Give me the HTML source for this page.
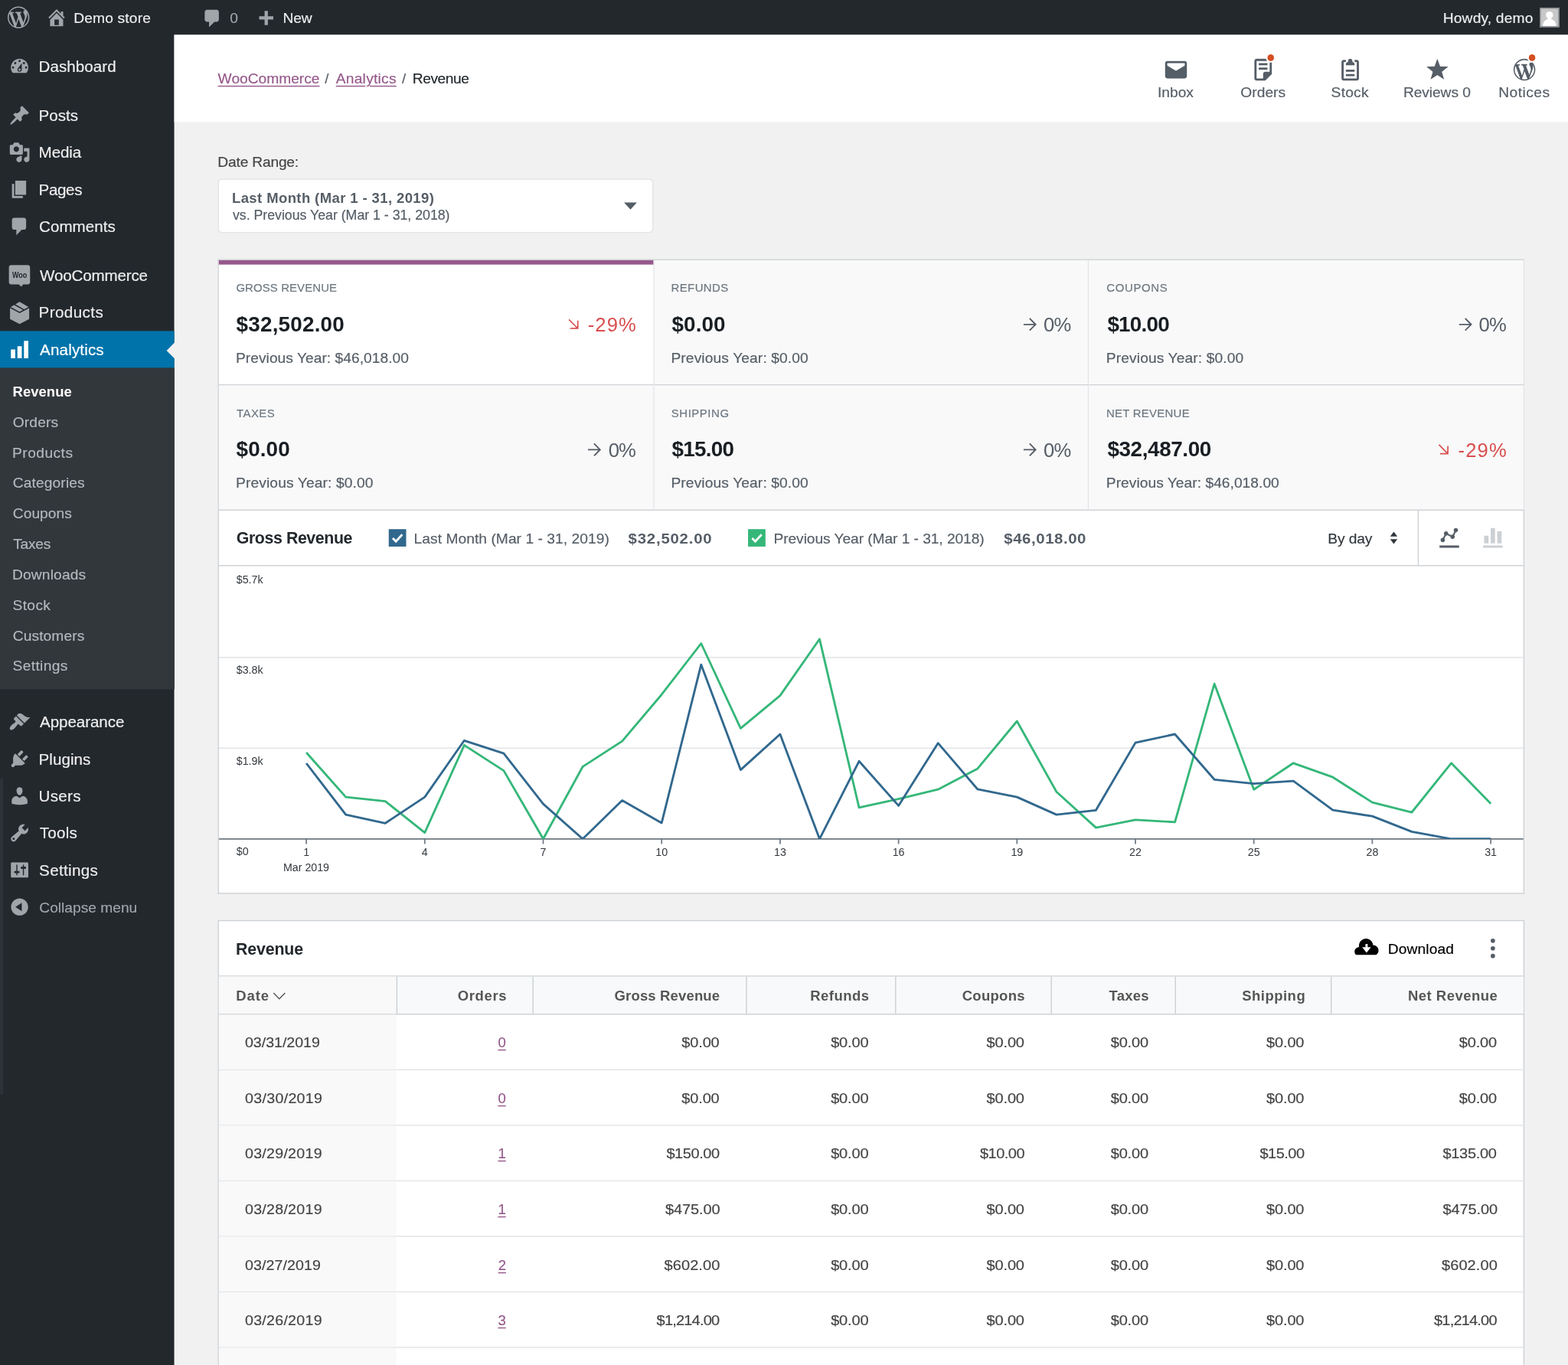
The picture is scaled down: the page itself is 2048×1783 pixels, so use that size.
<!DOCTYPE html>
<html lang="en">
<head>
<meta charset="utf-8">
<title>Revenue &lsaquo; Analytics &lsaquo; WooCommerce &lsaquo; Demo store &mdash; WordPress</title>
<style>
*{box-sizing:border-box;margin:0;padding:0}
html,body{width:2048px;height:1783px;overflow:hidden;background:#f1f1f1}
body{font-family:"Liberation Sans",sans-serif;color:#444}
#root{will-change:transform;position:absolute;left:0;top:0;width:1440px;height:1254px;transform:scale(1.4222222);transform-origin:0 0;overflow:hidden;background:#f1f1f1;font-size:13px}
#root div,#root ul,#root li,#root span,#root a,#root svg,#root b,#root i,#root h1,#root h2,#root label,#root p{position:absolute;display:block}
#root svg{fill:currentColor;overflow:visible}
ul{list-style:none}
.t{transform-origin:0 0;white-space:pre;font-weight:normal;font-style:normal;-webkit-text-stroke:0.12px currentColor}
.s10{font-size:10px;line-height:10px}
.s11{font-size:11px;line-height:11px}
.s12{font-size:12px;line-height:12px}
.s13{font-size:13px;line-height:13px}
.s14{font-size:14px;line-height:14px}
.s15{font-size:15px;line-height:15px}
.s18{font-size:18px;line-height:18px}
.s19{font-size:19px;line-height:19px}
.s105{font-size:10.5px;line-height:10.5px}
.s135{font-size:13.5px;line-height:13.5px}
.s125{font-size:12.5px;line-height:12.5px}
.s145{font-size:14.5px;line-height:14.5px}
.b{font-weight:bold;-webkit-text-stroke:0}
.lnk{color:#95588a;text-decoration:underline;text-decoration-thickness:1px;text-underline-offset:1.5px}
/* admin bar */
#adminbar{left:0;top:0;width:1440px;height:32px;background:#23282d;color:#eee}
#adminbar svg{color:#a0a5aa}
#adminbar .av{left:1414px;top:7px;width:18px;height:18px;background:#c8c8c8;border:1px solid #82878c;overflow:hidden}
/* sidebar */
#menuback{left:0;top:0;width:160px;height:1260px;background:#23282d}
#adminmenu{left:0;top:0;width:160px;height:1254px;color:#eee}
#adminmenu li{left:0;width:160px;height:34px}
#adminmenu li svg{color:#a0a5aa}
#adminmenu li.cur{background:#0073aa;color:#fff}
#adminmenu li.cur svg{color:#fff}
#adminmenu li.cur i{right:-0.6px;top:10px;width:0;height:0;border:8px solid transparent;border-right-color:#f1f1f1}
#adminmenu .sub{left:0;width:160px;background:#32373c}
#adminmenu .sub li{height:28px;color:#b4b9be}
#adminmenu .sub li.on{color:#fff}
#adminmenu li.col{color:#a0a5aa}
/* header */
#header{left:160px;top:32px;width:1280px;height:80px;background:#fff}
#header .tab{top:0;width:80px;height:80px;color:#555d66}
#header .dot{width:6.4px;height:6.4px;border-radius:50%;background:#d54e21;box-shadow:0 0 0 1.5px #fff}
/* filters */
#filters{left:200px;top:138px;width:1200px;height:80px}
#filters .dd{left:0;top:26px;width:400px;height:50px;background:#fff;border:1px solid #e2e4e7;border-radius:4px;color:#555d66}
/* summary */
#summary{left:200px;top:238px;width:1200px;height:231px;background:#f9f9f9;border:1px solid #ccd0d4;border-width:1px 0 0 1px}
#summary li{height:115px;border:1px solid #ccd0d4;border-width:0 1px 1px 0;border-right-color:#e2e4e7;background:#f9f9f9}
#summary li.sel{background:#fff}
#summary li.sel:before{content:"";position:absolute;left:0;right:0;top:0;height:4px;background:#95588a}
.lb{color:#6c7781;text-transform:uppercase}
.val{color:#191e23}
.dl{color:#555d66;-webkit-text-stroke:0}
.neg{color:#d94f4f;-webkit-text-stroke:0}
.pv{color:#555d66}
/* chart */
#chart{left:200px;top:469px;width:1200px;height:352px;background:#fff;border:1px solid #ccd0d4;border-top:0}
#chart .hd{left:0;top:0;width:1198px;height:51px;border-bottom:1px solid #ccd0d4}
#chart .cb{width:16px;height:16px}
#chart .vd{width:1px;height:50px;top:0;background:#ccd0d4}
#chartsvg text{font-family:"Liberation Sans",sans-serif;font-size:10px;fill:#32373c}
/* table */
#tcard{left:200px;top:845px;width:1200px;height:420px;background:#fff;border:1px solid #ccd0d4}
#tcard .hd{left:0;top:0;width:1198px;height:51px;border-bottom:1px solid #ccd0d4}
#tbl{left:0;top:51px;width:1198px;height:400px}
#tbl .tr{left:0;width:1198px;height:51px;border-bottom:1px solid #e2e4e7;color:#444}
#tbl .th{height:35px;background:#f8f9fa;color:#555;border-bottom:1px solid #ccd0d4}
#tbl .th i{top:0;width:1px;height:34px;background:#ccd0d4}
#tbl .dc{left:0;top:0;height:50px;background:#f9f9f9}
#tbl .th .dc{height:34px}
</style>
</head>
<body>
<div id="root">
<div id="menuback"></div>
<div style="left:0;top:715px;width:3px;height:290px;background:#2c3338"></div>
<ul id="adminmenu">
<li class="m" style="top:44px">
<svg width="20" height="20" viewBox="0 0 20 20" style="left:8px;top:7px"><path d="M3.76 16h12.48c1.1-1.37 1.76-3.11 1.76-5 0-4.42-3.58-8-8-8s-8 3.58-8 8c0 1.89.66 3.63 1.76 5zM10 4c.55 0 1 .45 1 1s-.45 1-1 1-1-.45-1-1 .45-1 1-1zM6 6c.55 0 1 .45 1 1s-.45 1-1 1-1-.45-1-1 .45-1 1-1zm8 0c.55 0 1 .45 1 1s-.45 1-1 1-1-.45-1-1 .45-1 1-1zm-5.37 5.55L12 7v6c0 1.1-.9 2-2 2s-2-.9-2-2c0-.57.24-1.08.63-1.45zM4 10c.55 0 1 .45 1 1s-.45 1-1 1-1-.45-1-1 .45-1 1-1zm12 0c.55 0 1 .45 1 1s-.45 1-1 1-1-.45-1-1 .45-1 1-1zm-5 3c0-.55-.45-1-1-1s-1 .45-1 1 .45 1 1 1 1-.45 1-1z"/></svg>
<span class="t s145" style="left:35.57px;top:10px;transform:translateY(0.094px);letter-spacing:0.02px">Dashboard</span>
</li>
<li class="m" style="top:89px">
<svg width="20" height="20" viewBox="0 0 20 20" style="left:8px;top:7px"><path d="M10.44 3.02l1.82-1.82 6.36 6.35-1.83 1.82c-1.05-.68-2.48-.57-3.41.36l-.75.75c-.92.93-1.04 2.35-.35 3.41l-1.83 1.82-2.41-2.41-2.8 2.79c-.42.42-3.38 2.71-3.8 2.29s1.86-3.39 2.28-3.81l2.79-2.79L4.1 9.36l1.83-1.82c1.05.69 2.48.57 3.4-.36l.75-.75c.93-.92 1.05-2.35.36-3.41z"/></svg>
<span class="t s145" style="left:35.57px;top:10px;transform:translateY(0.094px);letter-spacing:-0.01px">Posts</span>
</li>
<li class="m" style="top:123px">
<svg width="20" height="20" viewBox="0 0 20 20" style="left:8px;top:7px"><path d="M13 11V4c0-.55-.45-1-1-1h-1.67L9 1H5L3.67 3H2c-.55 0-1 .45-1 1v7c0 .55.45 1 1 1h10c.55 0 1-.45 1-1zM7 4.5c1.38 0 2.5 1.12 2.5 2.5S8.38 9.5 7 9.5 4.5 8.38 4.5 7 5.62 4.5 7 4.5zM14 6h5v10.5c0 1.38-1.12 2.5-2.5 2.5S14 17.88 14 16.5s1.12-2.5 2.5-2.5c.17 0 .34.02.5.05V9h-3V6zm-4 8.05V13h2v3.5c0 1.38-1.12 2.5-2.5 2.5S7 17.88 7 16.5 8.12 14 9.5 14c.17 0 .34.02.5.05z"/></svg>
<span class="t s145" style="left:35.57px;top:9px;transform:translateY(0.844px);letter-spacing:-0.08px">Media</span>
</li>
<li class="m" style="top:157px">
<svg width="20" height="20" viewBox="0 0 20 20" style="left:8px;top:7px"><path d="M6 15V2h10v13H6zm-1 1h8v2H3V5h2v11z"/></svg>
<span class="t s145" style="left:35.57px;top:10px;transform:translateY(0.297px);letter-spacing:-0.27px">Pages</span>
</li>
<li class="m" style="top:191px">
<svg width="20" height="20" viewBox="0 0 20 20" style="left:8px;top:7px"><path d="M5 2h9q.82 0 1.41.59T16 4v7q0 .82-.59 1.41T14 13h-2l-5 5v-5H5q-.82 0-1.41-.59T3 11V4q0-.82.59-1.41T5 2z"/></svg>
<span class="t s145" style="left:35.93px;top:10px;transform:translateY(0.047px);letter-spacing:-0.01px">Comments</span>
</li>
<li class="m" style="top:236px">
<svg width="20" height="21" viewBox="0 0 20 21" style="left:8px;top:7px"><path d="M2.2.5h15.4c1.1 0 2 .9 2 2v13.7c0 1.1-.9 2-2 2h-4.4l-1.5 2.2-2.6-2.2H2.2c-1.1 0-2-.9-2-2V2.500c0-1.1.9-2 2-2z"/><text x="3.200" y="12" textLength="13.600" lengthAdjust="spacingAndGlyphs" font-family="Liberation Sans,sans-serif" font-size="7.800" font-weight="bold" fill="#23282d">Woo</text></svg>
<span class="t s145" style="left:36.63px;top:10px;transform:translateY(0.047px);letter-spacing:-0.14px">WooCommerce</span>
</li>
<li class="m" style="top:270px">
<svg width="20" height="21" viewBox="0 0 20 21" style="left:8px;top:7px"><path d="M10 .2l8.8 5.1v10.8L10 20.6l-8.8-4.500V5.300z"/><g fill="none" stroke="#23282d" stroke-width="1.1"><path d="M1.2 5.300L10 10l8.800-4.700"/><path d="M5.300 2.700l8.900 5"/></g></svg>
<span class="t s145" style="left:35.57px;top:9px;transform:translateY(0.797px);letter-spacing:0.28px">Products</span>
</li>
<li class="m cur" style="top:304px">
<svg width="20" height="20" viewBox="0 0 20 20" style="left:8px;top:7px"><path d="M18 18V2h-4v16h4zm-6 0V7H8v11h4zm-6 0v-8H2v8h4z"/></svg>
<span class="t s145" style="left:36.63px;top:10px;transform:translateY(0.250px);letter-spacing:0.09px">Analytics</span>
<i></i>
</li>
<li class="sub" style="top:338px;height:295px"><ul class="sub" style="top:0;height:295px">
<li class=on style="top:7px">
<span class="t s13 b" style="left:11.63px;top:8px;transform:translateY(0.219px);letter-spacing:0.02px">Revenue</span>
</li>
<li style="top:35px">
<span class="t s135" style="left:11.81px;top:8px;transform:translateY(0.344px);letter-spacing:0.09px">Orders</span>
</li>
<li style="top:63px">
<span class="t s135" style="left:11.28px;top:8px;transform:translateY(0.469px);letter-spacing:0.32px">Products</span>
</li>
<li style="top:91px">
<span class="t s135" style="left:11.81px;top:7px;transform:translateY(0.891px);letter-spacing:0.08px">Categories</span>
</li>
<li style="top:119px">
<span class="t s135" style="left:11.81px;top:8px;transform:translateY(0.016px);letter-spacing:0.02px">Coupons</span>
</li>
<li style="top:147px">
<span class="t s135" style="left:12.16px;top:8px;transform:translateY(0.141px);letter-spacing:-0.2px">Taxes</span>
</li>
<li style="top:175px">
<span class="t s135" style="left:11.28px;top:8px;transform:translateY(0.266px);letter-spacing:0.1px">Downloads</span>
</li>
<li style="top:203px">
<span class="t s135" style="left:11.63px;top:8px;transform:translateY(0.391px);letter-spacing:0.24px">Stock</span>
</li>
<li style="top:231px">
<span class="t s135" style="left:11.81px;top:8px;transform:translateY(0.516px);letter-spacing:0.06px">Customers</span>
</li>
<li style="top:259px">
<span class="t s135" style="left:11.63px;top:7px;transform:translateY(0.938px);letter-spacing:0.24px">Settings</span>
</li>
</ul></li>
<li class="m" style="top:646px">
<svg width="20" height="20" viewBox="0 0 20 20" style="left:8px;top:7px"><path d="M14.48 11.06L7.41 3.99l1.5-1.5c.5-.56 2.3-.47 3.51.32 1.21.8 1.43 1.28 2.91 2.1 1.18.64 2.45 1.26 4.45.85zm-.71.71L6.7 4.7 4.93 6.47c-.39.39-.39 1.02 0 1.41l1.06 1.06c.39.39.39 1.03 0 1.42-.6.6-1.43 1.11-2.21 1.69-.35.26-.7.53-1.01.84C1.43 14.23.4 16.08 1.4 17.07c.99 1 2.84-.03 4.18-1.36.31-.31.58-.66.85-1.02.57-.78 1.08-1.61 1.69-2.21.39-.39 1.02-.39 1.41 0l1.06 1.06c.39.39 1.02.39 1.41 0z"/></svg>
<span class="t s145" style="left:36.63px;top:9px;transform:translateY(0.969px);letter-spacing:-0.07px">Appearance</span>
</li>
<li class="m" style="top:680px">
<svg width="20" height="20" viewBox="0 0 20 20" style="left:8px;top:7px"><path d="M13.11 4.36L9.87 7.6 8 5.73l3.24-3.24c.35-.34 1.05-.2 1.56.32.52.51.66 1.21.31 1.55zm-8 1.77l.91-1.12 9.01 9.01-1.19.84c-.71.71-2.63 1.16-3.82 1.16H6.14L4.9 17.26c-.59.59-1.54.59-2.12 0-.59-.58-.59-1.53 0-2.12l1.24-1.24v-3.88c0-1.13.4-3.19 1.09-3.89zm7.26 3.97l3.24-3.24c.34-.35 1.04-.21 1.55.31.52.51.66 1.21.31 1.55l-3.24 3.25z"/></svg>
<span class="t s145" style="left:35.57px;top:10px;transform:translateY(0.422px);letter-spacing:0.02px">Plugins</span>
</li>
<li class="m" style="top:714px">
<svg width="20" height="20" viewBox="0 0 20 20" style="left:8px;top:7px"><path d="M10 9.25c-2.27 0-2.73-3.44-2.73-3.44C7 4.02 7.82 2 9.97 2c2.16 0 2.98 2.02 2.71 3.81 0 0-.41 3.44-2.68 3.44zm0 2.57L12.72 10c2.39 0 4.52 2.33 4.52 4.53v2.49s-3.65 1.13-7.24 1.13c-3.65 0-7.24-1.13-7.24-1.13v-2.49c0-2.25 1.94-4.48 4.47-4.48z"/></svg>
<span class="t s145" style="left:35.57px;top:10px;transform:translateY(0.172px);letter-spacing:0.18px">Users</span>
</li>
<li class="m" style="top:748px">
<svg width="20" height="20" viewBox="0 0 20 20" style="left:8px;top:7px"><path d="M16.68 9.77c-1.34 1.34-3.3 1.67-4.95.99l-5.41 6.52c-.99.99-2.59.99-3.58 0s-.99-2.59 0-3.57l6.52-5.42c-.68-1.65-.35-3.61.99-4.95 1.28-1.28 3.12-1.62 4.72-1.06l-2.89 2.89 2.82 2.82 2.86-2.87c.53 1.58.18 3.39-1.08 4.65zM3.81 16.21c.4.39 1.04.39 1.43 0 .4-.4.4-1.04 0-1.43-.39-.4-1.03-.4-1.43 0-.39.39-.39 1.03 0 1.43z"/></svg>
<span class="t s145" style="left:36.45px;top:9px;transform:translateY(0.922px);letter-spacing:0.14px">Tools</span>
</li>
<li class="m" style="top:782px">
<svg width="20" height="20" viewBox="0 0 20 20" style="left:8px;top:7px"><path d="M18 16V4c0-.55-.45-1-1-1H3c-.55 0-1 .45-1 1v12c0 .55.45 1 1 1h14c.55 0 1-.45 1-1zM8 11h1c.55 0 1 .45 1 1s-.45 1-1 1H8v1.5c0 .28-.22.5-.5.5s-.5-.22-.5-.5V13H6c-.55 0-1-.45-1-1s.45-1 1-1h1V5.5c0-.28.22-.5.5-.5s.5.22.5.5V11zm5-2h-1c-.55 0-1-.45-1-1s.45-1 1-1h1V5.5c0-.28.22-.5.5-.5s.5.22.5.5V7h1c.55 0 1 .45 1 1s-.45 1-1 1h-1v5.5c0 .28-.22.5-.5.5s-.5-.22-.5-.5V9z"/></svg>
<span class="t s145" style="left:35.93px;top:10px;transform:translateY(0.375px);letter-spacing:0.23px">Settings</span>
</li>
<li class="m col" style="top:816px">
<svg width="20" height="20" viewBox="0 0 20 20" style="left:8px;top:7px"><path d="M10 2.16c4.33 0 7.84 3.51 7.84 7.84s-3.51 7.84-7.84 7.84S2.16 14.33 2.16 10 5.67 2.16 10 2.16zm2 11.72V6.12L6.18 9.97z"/></svg>
<span class="t s135" style="left:36.1px;top:11px;transform:translateY(0.125px);letter-spacing:-0.01px">Collapse menu</span>
</li>
</ul>
<div id="adminbar">
<svg width="20" height="20" viewBox="0 0 20 20" style="left:7px;top:6px"><path d="M20 10c0-5.51-4.49-10-10-10C4.48 0 0 4.49 0 10c0 5.52 4.48 10 10 10 5.51 0 10-4.48 10-10zM7.78 15.37L4.37 6.22c.55-.02 1.17-.08 1.17-.08.5-.06.44-1.13-.06-1.11 0 0-1.45.11-2.37.11-.18 0-.37 0-.58-.01C4.12 2.69 6.87 1.11 10 1.11c2.33 0 4.45.87 6.05 2.34-.68-.11-1.65.39-1.65 1.58 0 .74.45 1.36.9 2.1.35.61.55 1.36.55 2.46 0 1.49-1.4 5-1.4 5l-3.03-8.37c.54-.02.82-.17.82-.17.5-.05.44-1.25-.06-1.22 0 0-1.44.12-2.38.12-.87 0-2.33-.12-2.33-.12-.5-.03-.56 1.2-.06 1.22l.92.08 1.26 3.41zM17.41 10c.24-.64.74-1.87.43-4.25.7 1.29 1.05 2.71 1.05 4.25 0 3.29-1.73 6.24-4.4 7.78.97-2.59 1.94-5.2 2.92-7.78zM6.1 18.09C3.12 16.65 1.11 13.53 1.11 10c0-1.3.23-2.48.72-3.59C3.25 10.3 4.67 14.2 6.1 18.09zm4.03-6.63l2.58 6.98c-.86.29-1.76.45-2.71.45-.79 0-1.57-.11-2.29-.33.81-2.38 1.62-4.74 2.42-7.1z"/></svg>
<svg width="20" height="20" viewBox="0 0 20 20" style="left:42px;top:6px"><path d="M16 8.5l1.53 1.53-1.06 1.06L10 4.62l-6.47 6.47-1.06-1.06L10 2.5l4 4v-2h2v4zm-6-2.46l6 5.99V18H4v-5.97zM12 17v-5H8v5h4z"/></svg>
<span class="t s135" style="left:67.67px;top:10px;transform:translateY(0.094px);letter-spacing:0.11px">Demo store</span>
<svg width="20" height="20" viewBox="0 0 20 20" style="left:185px;top:7.4px"><path d="M5 2h9q.82 0 1.41.59T16 4v7q0 .82-.59 1.41T14 13h-2l-5 5v-5H5q-.82 0-1.41-.59T3 11V4q0-.82.59-1.41T5 2z"/></svg>
<span class="t s135" style="left:211.11px;top:10px;transform:translateY(0.094px);color:#a0a5aa">0</span>
<svg width="20" height="20" viewBox="0 0 20 20" style="left:234.4px;top:8.3px"><path d="M17 7v3h-5v5H9v-5H4V7h5V2h3v5h5z"/></svg>
<span class="t s135" style="left:259.77px;top:10px;transform:translateY(0.094px);letter-spacing:-0.09px">New</span>
<span class="t s135" style="left:1325.21px;top:10px;transform:translateY(0.094px);letter-spacing:0.12px">Howdy, demo</span>
<div class="av"><svg width="16" height="16" viewBox="0 0 16 16" style="left:0;top:0;color:#fff"><circle cx="8" cy="5.800" r="3.300"/><path d="M1.900 16c0-3.600 1.900-5.800 4.500-6.500V8h3.200v1.500c2.600.700 4.500 2.900 4.500 6.500z"/></svg></div>
</div>
<div id="header">
<a class="t s135 lnk" style="left:40.14px;top:33px;transform:translateY(0.641px);letter-spacing:-0.01px">WooCommerce</a>
<span class="t s13" style="left:138.37px;top:33px;transform:translateY(0.641px);color:#555d66">/</span>
<a class="t s135 lnk" style="left:148.49px;top:33px;transform:translateY(0.641px);letter-spacing:0.17px">Analytics</a>
<span class="t s13" style="left:209.1px;top:33px;transform:translateY(0.641px);color:#555d66">/</span>
<span class="t s135" style="left:218.88px;top:33px;transform:translateY(0.641px);letter-spacing:-0.33px;color:#23282d">Revenue</span>
<div class="tab" style="left:880px">
<svg width="24" height="24" viewBox="0 0 24 24" style="left:28px;top:20px"><path d="M20 4H4c-1.105 0-2 .895-2 2v12c0 1.105.895 2 2 2h16c1.105 0 2-.895 2-2V6c0-1.105-.895-2-2-2zm0 4.236l-8 4.882-8-4.882V6h16v2.236z"/></svg>
<span class="t s135" style="left:23.05px;top:46px;transform:translateY(0.297px);letter-spacing:0.02px">Inbox</span>
</div>
<div class="tab" style="left:960px">
<svg width="24" height="24" viewBox="0 0 24 24" style="left:28px;top:20px"><path d="M16 8H8V6h8v2zm0 2H8v2h8v-2zm4-6v12l-6 6H6c-1.105 0-2-.895-2-2V4c0-1.105.895-2 2-2h12c1.105 0 2 .895 2 2zm-2 10V4H6v16h6v-4c0-1.105.895-2 2-2h4z"/></svg>
<b class="dot" style="left:43.8px;top:17.700px"></b>
<span class="t s135" style="left:19.27px;top:46px;transform:translateY(0.297px);letter-spacing:0.02px">Orders</span>
</div>
<div class="tab" style="left:1040px">
<svg width="24" height="24" viewBox="0 0 24 24" style="left:28px;top:20px"><path d="M16 18H8v-2h8v2zm0-6H8v2h8v-2zm2-9h-2v2h2v15H6V5h2V3H6c-1.105 0-2 .895-2 2v15c0 1.105.895 2 2 2h12c1.105 0 2-.895 2-2V5c0-1.105-.895-2-2-2zm-4 2V4c0-1.105-.895-2-2-2s-2 .895-2 2v1c-1.105 0-2 .895-2 2v1h8V7c0-1.105-.895-2-2-2z"/></svg>
<span class="t s135" style="left:22.48px;top:46px;transform:translateY(0.297px);letter-spacing:0.15px">Stock</span>
</div>
<div class="tab" style="left:1120px">
<svg width="24" height="24" viewBox="0 0 24 24" style="left:28px;top:20px"><path d="M12 2l2.582 6.953L22 9.257l-5.822 4.602L18.18 21 12 16.89 5.82 21l2.002-7.14L2 9.256l7.418-.304z"/></svg>
<span class="t s135" style="left:8.75px;top:46px;transform:translateY(0.297px);letter-spacing:-0.05px">Reviews 0</span>
</div>
<div class="tab" style="left:1200px">
<svg width="20" height="20" viewBox="0 0 20 20" style="left:30px;top:21.9px"><path d="M20 10c0-5.51-4.49-10-10-10C4.48 0 0 4.49 0 10c0 5.52 4.48 10 10 10 5.51 0 10-4.48 10-10zM7.78 15.37L4.37 6.22c.55-.02 1.17-.08 1.17-.08.5-.06.44-1.13-.06-1.11 0 0-1.45.11-2.37.11-.18 0-.37 0-.58-.01C4.12 2.69 6.87 1.11 10 1.11c2.33 0 4.45.87 6.05 2.34-.68-.11-1.65.39-1.65 1.58 0 .74.45 1.36.9 2.1.35.61.55 1.36.55 2.46 0 1.49-1.4 5-1.4 5l-3.03-8.37c.54-.02.82-.17.82-.17.5-.05.44-1.25-.06-1.22 0 0-1.44.12-2.38.12-.87 0-2.33-.12-2.33-.12-.5-.03-.56 1.2-.06 1.22l.92.08 1.26 3.41zM17.41 10c.24-.64.74-1.87.43-4.25.7 1.29 1.05 2.71 1.05 4.25 0 3.29-1.73 6.24-4.4 7.78.97-2.59 1.94-5.2 2.92-7.78zM6.1 18.09C3.12 16.65 1.11 13.53 1.11 10c0-1.3.23-2.48.72-3.59C3.25 10.3 4.67 14.2 6.1 18.09zm4.03-6.63l2.58 6.98c-.86.29-1.76.45-2.71.45-.79 0-1.57-.11-2.29-.33.81-2.38 1.62-4.74 2.42-7.1z"/></svg>
<b class="dot" style="left:43.8px;top:17.700px"></b>
<span class="t s135" style="left:16.22px;top:46px;transform:translateY(0.297px);letter-spacing:0.32px">Notices</span>
</div>
</div>
<div id="filters">
<span class="t s135" style="left:-0.07px;top:4px;transform:translateY(0.281px);letter-spacing:-0.14px;color:#444">Date Range:</span>
<div class="dd">
<span class="t s13 b" style="left:12.05px;top:10px;transform:translateY(0.328px);letter-spacing:0.28px">Last Month (Mar 1 - 31, 2019)</span>
<span class="t s125" style="left:12.71px;top:26px;transform:translateY(0.797px);letter-spacing:-0.02px">vs. Previous Year (Mar 1 - 31, 2018)</span>
<svg width="12" height="7" viewBox="0 0 12 7" style="left:371.99px;top:20.55px"><path d="M.100 0h11.800L6 6.400z"/></svg>
</div>
</div>
<ul id="summary">
<li class=sel style="left:0px;top:0px;width:399.67px">
<span class="t s105 lb" style="left:15.84px;top:19px;transform:translateY(0.891px);letter-spacing:0.08px">Gross Revenue</span>
<span class="t s19 b val" style="left:16.47px;top:49px;transform:translateY(0.453px) scaleX(1.03);letter-spacing:0.14px">$32,502.00</span>
<svg class="neg" width="18" height="18" viewBox="0 0 24 24" style="left:316.92px;top:49.95px"><path transform="rotate(45 12 12)" d="M12.700 4.700l-1.100 1.100L16.900 11.200H3.500v1.600h13.400l-5.300 5.400 1.100 1.100 7.300-7.300z"/></svg>
<span class="t s18 neg" style="left:338.75px;top:50px;transform:translateY(0.453px);letter-spacing:0.81px">-29%</span>
<span class="t s135 pv" style="left:15.59px;top:83px;transform:translateY(0.281px);letter-spacing:0.02px">Previous Year: $46,018.00</span>
</li>
<li style="left:399.67px;top:0px;width:399.67px">
<span class="t s105 lb" style="left:15.66px;top:19px;transform:translateY(0.891px);letter-spacing:0.29px">Refunds</span>
<span class="t s19 b val" style="left:16.47px;top:49px;transform:translateY(0.453px) scaleX(1.03);letter-spacing:0.06px">$0.00</span>
<svg class="dl" width="18" height="18" viewBox="0 0 24 24" style="left:336.47px;top:50.05px"><path d="M12 4l-1.200 1.200L16.700 11.150H4v1.700h12.700l-5.900 5.950L12 20l8-8z"/></svg>
<span class="t s18 dl" style="left:357.77px;top:50px;transform:translateY(0.453px);letter-spacing:-0.6px">0%</span>
<span class="t s135 pv" style="left:15.59px;top:83px;transform:translateY(0.281px);letter-spacing:0.08px">Previous Year: $0.00</span>
</li>
<li style="left:799.33px;top:0px;width:399.67px">
<span class="t s105 lb" style="left:15.84px;top:19px;transform:translateY(0.891px);letter-spacing:0.47px">Coupons</span>
<span class="t s19 b val" style="left:16.47px;top:49px;transform:translateY(0.453px) scaleX(1.03);letter-spacing:-0.53px">$10.00</span>
<svg class="dl" width="18" height="18" viewBox="0 0 24 24" style="left:336.47px;top:50.05px"><path d="M12 4l-1.200 1.200L16.700 11.150H4v1.700h12.700l-5.900 5.950L12 20l8-8z"/></svg>
<span class="t s18 dl" style="left:357.77px;top:50px;transform:translateY(0.453px);letter-spacing:-0.6px">0%</span>
<span class="t s135 pv" style="left:15.59px;top:83px;transform:translateY(0.281px);letter-spacing:0.08px">Previous Year: $0.00</span>
</li>
<li style="left:0px;top:115px;width:399.67px">
<span class="t s105 lb" style="left:16.19px;top:20px;transform:translateY(0.203px);letter-spacing:0.36px">Taxes</span>
<span class="t s19 b val" style="left:16.47px;top:49px;transform:translateY(0.062px) scaleX(1.03);letter-spacing:0.06px">$0.00</span>
<svg class="dl" width="18" height="18" viewBox="0 0 24 24" style="left:336.47px;top:50.05px"><path d="M12 4l-1.200 1.200L16.700 11.150H4v1.700h12.700l-5.900 5.950L12 20l8-8z"/></svg>
<span class="t s18 dl" style="left:357.77px;top:50px;transform:translateY(0.766px);letter-spacing:-0.6px">0%</span>
<span class="t s135 pv" style="left:15.59px;top:82px;transform:translateY(0.891px);letter-spacing:0.08px">Previous Year: $0.00</span>
</li>
<li style="left:399.67px;top:115px;width:399.67px">
<span class="t s105 lb" style="left:15.84px;top:20px;transform:translateY(0.203px);letter-spacing:0.39px">Shipping</span>
<span class="t s19 b val" style="left:16.47px;top:49px;transform:translateY(0.062px) scaleX(1.03);letter-spacing:-0.5px">$15.00</span>
<svg class="dl" width="18" height="18" viewBox="0 0 24 24" style="left:336.47px;top:50.05px"><path d="M12 4l-1.200 1.200L16.700 11.150H4v1.700h12.700l-5.900 5.950L12 20l8-8z"/></svg>
<span class="t s18 dl" style="left:357.77px;top:50px;transform:translateY(0.766px);letter-spacing:-0.6px">0%</span>
<span class="t s135 pv" style="left:15.59px;top:82px;transform:translateY(0.891px);letter-spacing:0.08px">Previous Year: $0.00</span>
</li>
<li style="left:799.33px;top:115px;width:399.67px">
<span class="t s105 lb" style="left:15.66px;top:20px;transform:translateY(0.203px);letter-spacing:0.19px">Net Revenue</span>
<span class="t s19 b val" style="left:16.47px;top:49px;transform:translateY(0.062px) scaleX(1.03);letter-spacing:-0.26px">$32,487.00</span>
<svg class="neg" width="18" height="18" viewBox="0 0 24 24" style="left:316.92px;top:49.95px"><path transform="rotate(45 12 12)" d="M12.700 4.700l-1.100 1.100L16.900 11.200H3.500v1.600h13.400l-5.300 5.400 1.100 1.100 7.300-7.300z"/></svg>
<span class="t s18 neg" style="left:338.75px;top:50px;transform:translateY(0.766px);letter-spacing:0.81px">-29%</span>
<span class="t s135 pv" style="left:15.59px;top:82px;transform:translateY(0.891px);letter-spacing:0.02px">Previous Year: $46,018.00</span>
</li>
</ul>
<div id="chart">
<div class="hd">
<span class="t s15 b" style="left:16.05px;top:17px;transform:translateY(0.219px);letter-spacing:-0.28px;color:#23282d">Gross Revenue</span>
<div class="cb" style="left:156.19px;top:17.21px;background:#31688e"><svg width="16" height="16" viewBox="0 0 16 16" style="left:0;top:0"><path fill="none" stroke="#fff" stroke-width="2" d="M3.700 8.300l2.900 2.900 5.800-6.200"/></svg></div>
<span class="t s135 pv" style="left:179.14px;top:19px;transform:translateY(0.219px);letter-spacing:0.03px">Last Month (Mar 1 - 31, 2019)</span>
<span class="t s13 b pv" style="left:375.54px;top:19px;transform:translateY(0.219px) scaleX(1.1);letter-spacing:0.51px">$32,502.00</span>
<div class="cb" style="left:486.09px;top:17.21px;background:#35b779"><svg width="16" height="16" viewBox="0 0 16 16" style="left:0;top:0"><path fill="none" stroke="#fff" stroke-width="2" d="M3.700 8.300l2.900 2.900 5.800-6.200"/></svg></div>
<span class="t s135 pv" style="left:509.47px;top:19px;transform:translateY(0.219px);letter-spacing:-0.05px">Previous Year (Mar 1 - 31, 2018)</span>
<span class="t s13 b pv" style="left:720.63px;top:19px;transform:translateY(0.219px) scaleX(1.1);letter-spacing:0.38px">$46,018.00</span>
<span class="t s135" style="left:1018.46px;top:19px;transform:translateY(0.219px);letter-spacing:-0.08px;color:#32373c">By day</span>
<svg width="8" height="12" viewBox="0 0 8 12" style="left:1075.04px;top:19.09px;color:#32373c"><path d="M4 .400l3.300 4.400H.700zM4 11.600L.700 7.200h6.600z"/></svg>
<div class="vd" style="left:1101px"></div>
<svg width="24" height="24" viewBox="0 0 24 24" style="left:1118px;top:13.1px;color:#555d66"><path d="M3 19h18v2H3zm3-3c1.1 0 2-.9 2-2 0-.5-.2-1-.5-1.3L8.8 10H9c.5 0 1-.2 1.3-.5l2.7 1.4v.1c0 1.1.9 2 2 2s2-.9 2-2c0-.5-.2-.9-.5-1.3L17.8 7h.2c1.1 0 2-.9 2-2s-.9-2-2-2-2 .9-2 2c0 .5.2 1 .5 1.3L15.2 9H15c-.5 0-1 .2-1.3.5L11 8.2V8c0-1.1-.9-2-2-2s-2 .9-2 2c0 .5.2 1 .5 1.3L6.2 12H6c-1.1 0-2 .9-2 2s.9 2 2 2z"/></svg>
<svg width="24" height="24" viewBox="0 0 24 24" style="left:1158.1px;top:13.1px;color:#ccd0d4"><path d="M21 21H3v-2h18v2zM8 10H4v7h4v-7zm6-7h-4v14h4V3zm6 3h-4v11h4V6z"/></svg>
</div>
<svg id="chartsvg" width="1198" height="300" viewBox="0 0 1198 300" style="left:0;top:51px">
<g stroke="#e2e4e7" stroke-width="1">
<line x1="0" x2="1198" y1="83.84" y2="83.84"/>
<line x1="0" x2="1198" y1="167.16" y2="167.16"/>
</g>
<g fill="#32373c">
<text x="16.13" y="15.57">$5.7k</text>
<text x="16.13" y="98.89">$3.8k</text>
<text x="16.13" y="182.21">$1.9k</text>
<text x="16.13" y="265.53">$0</text>
<text x="80.32" y="266.16" text-anchor="middle">1</text>
<text x="189.09" y="266.16" text-anchor="middle">4</text>
<text x="297.87" y="266.16" text-anchor="middle">7</text>
<text x="406.64" y="266.16" text-anchor="middle">10</text>
<text x="515.41" y="266.16" text-anchor="middle">13</text>
<text x="624.19" y="266.16" text-anchor="middle">16</text>
<text x="732.96" y="266.16" text-anchor="middle">19</text>
<text x="841.73" y="266.16" text-anchor="middle">22</text>
<text x="950.51" y="266.16" text-anchor="middle">25</text>
<text x="1059.28" y="266.16" text-anchor="middle">28</text>
<text x="1168.05" y="266.16" text-anchor="middle">31</text>
<text x="80.25" y="280.09" text-anchor="middle">Mar 2019</text>
</g>
<g stroke="#6c7781" stroke-width="1.2">
<line x1="0" x2="1198" y1="250.48" y2="250.48"/>
<line x1="80.32" x2="80.32" y1="250.48" y2="255.12"/>
<line x1="189.09" x2="189.09" y1="250.48" y2="255.12"/>
<line x1="297.87" x2="297.87" y1="250.48" y2="255.12"/>
<line x1="406.64" x2="406.64" y1="250.48" y2="255.12"/>
<line x1="515.41" x2="515.41" y1="250.48" y2="255.12"/>
<line x1="624.19" x2="624.19" y1="250.48" y2="255.12"/>
<line x1="732.96" x2="732.96" y1="250.48" y2="255.12"/>
<line x1="841.73" x2="841.73" y1="250.48" y2="255.12"/>
<line x1="950.51" x2="950.51" y1="250.48" y2="255.12"/>
<line x1="1059.28" x2="1059.28" y1="250.48" y2="255.12"/>
<line x1="1168.05" x2="1168.05" y1="250.48" y2="255.12"/>
</g>
<clipPath id="plot"><rect x="0" y="0" width="1198" height="250.7"/></clipPath>
<g clip-path="url(#plot)" fill="none" stroke-width="2" stroke-linejoin="round">
<polyline stroke="#35b779" points="80.32,171.17 116.58,212.02 152.84,215.89 189.09,244.72 225.35,164.42 261.61,187.77 297.87,250.48 334.12,184.18 370.38,160.7 406.64,117.88 442.9,70.98 479.16,148.88 515.41,118.86 551.67,66.97 587.93,221.66 624.19,213.78 660.45,205.06 696.7,186.08 732.96,142.34 769.22,207.24 805.48,240.15 841.73,232.91 877.99,235.09 914.25,108.03 950.51,205.06 986.77,180.87 1023.02,193.81 1059.28,216.95 1095.54,226.02 1131.8,180.87 1168.05,218.07"/>
<polyline stroke="#31688e" points="80.32,181.02 116.58,228.2 152.84,236.07 189.09,212.02 225.35,160.13 261.61,171.95 297.87,218.35 334.12,250.48 370.38,215.19 406.64,235.79 442.9,90.45 479.16,187.06 515.41,154.3 551.67,250.48 587.93,179.12 624.19,219.97 660.45,162.52 696.7,204.78 732.96,212.02 769.22,228.2 805.48,224.12 841.73,162.1 877.99,154.3 914.25,195.99 950.51,199.79 986.77,197.26 1023.02,224.05 1059.28,229.67 1095.54,243.88 1131.8,250.48 1168.05,250.48"/>
</g>
</svg>
</div>
<div id="tcard">
<div class="hd">
<span class="t s15 b" style="left:15.63px;top:17px;transform:translateY(0.797px);letter-spacing:-0.12px;color:#23282d">Revenue</span>
<svg width="24" height="24" viewBox="0 0 24 24" style="left:1042px;top:13px;color:#000"><path d="M18 9c-.01 0-.017.002-.025.003C17.72 5.646 14.922 3 11.5 3 7.91 3 5 5.91 5 9.5c0 .524.07 1.03.186 1.52C5.123 11.015 5.064 11 5 11c-2.21 0-4 1.79-4 4 0 1.202.54 2.267 1.38 3h18.593C22.196 17.09 23 15.643 23 14c0-2.76-2.24-5-5-5zm-6 7l-4-5h3V8h2v3h3l-4 5z"/></svg>
<span class="t s135" style="left:1073.59px;top:19px;transform:translateY(0.094px);letter-spacing:0.08px;color:#000">Download</span>
<svg width="24" height="24" viewBox="0 0 24 24" style="left:1157.9px;top:13px;color:#555d66"><circle cx="12" cy="5" r="2"/><circle cx="12" cy="12" r="2"/><circle cx="12" cy="19" r="2"/></svg>
</div>
<div id="tbl">
<div class="tr th" style="top:0">
<div class="dc" style="width:162.94px"></div>
<span class="t s13 b" style="left:15.8px;top:10px;transform:translateY(0.984px);letter-spacing:0.59px">Date</span>
<svg width="17" height="17" viewBox="0 0 24 24" style="left:46.68px;top:8.77px"><path d="M20 9l-8 8-8-8 1-1 7 7 7-7z"/></svg>
<i style="left:163px"></i>
<i style="left:287.88px"></i>
<i style="left:484.05px"></i>
<i style="left:620.73px"></i>
<i style="left:763.75px"></i>
<i style="left:877.8px"></i>
<i style="left:1020.81px"></i>
<span class="t s13 b" style="left:219.32px;top:10px;transform:translateY(0.984px);letter-spacing:0.44px">Orders</span>
<span class="t s13 b" style="left:363.32px;top:10px;transform:translateY(0.984px);letter-spacing:0.11px">Gross Revenue</span>
<span class="t s13 b" style="left:543.08px;top:10px;transform:translateY(0.984px);letter-spacing:0.33px">Refunds</span>
<span class="t s13 b" style="left:682.61px;top:10px;transform:translateY(0.984px);letter-spacing:0.2px">Coupons</span>
<span class="t s13 b" style="left:817.51px;top:10px;transform:translateY(0.984px);letter-spacing:0.18px">Taxes</span>
<span class="t s13 b" style="left:939.57px;top:10px;transform:translateY(0.984px);letter-spacing:0.35px">Shipping</span>
<span class="t s13 b" style="left:1092.08px;top:10px;transform:translateY(0.984px);letter-spacing:0.33px">Net Revenue</span>
</div>
<div class="tr" style="top:35px">
<div class="dc" style="width:162.94px"></div>
<span class="t s13" style="left:24.15px;top:18px;transform:translateY(0.875px) scaleX(1.06);letter-spacing:-0.02px">03/31/2019</span>
<a class="t s13 lnk" style="left:256.34px;top:18px;transform:translateY(0.875px)">0</a>
<span class="t s13" style="left:425.18px;top:18px;transform:translateY(0.875px) scaleX(1.08);letter-spacing:-0.09px">$0.00</span>
<span class="t s13" style="left:562.15px;top:18px;transform:translateY(0.875px) scaleX(1.08);letter-spacing:-0.09px">$0.00</span>
<span class="t s13" style="left:705.1px;top:18px;transform:translateY(0.875px) scaleX(1.08);letter-spacing:-0.09px">$0.00</span>
<span class="t s13" style="left:819.14px;top:18px;transform:translateY(0.875px) scaleX(1.08);letter-spacing:-0.09px">$0.00</span>
<span class="t s13" style="left:962.23px;top:18px;transform:translateY(0.875px) scaleX(1.08);letter-spacing:-0.09px">$0.00</span>
<span class="t s13" style="left:1139.14px;top:18px;transform:translateY(0.875px) scaleX(1.08);letter-spacing:-0.09px">$0.00</span>
</div>
<div class="tr" style="top:86px">
<div class="dc" style="width:162.94px"></div>
<span class="t s13" style="left:24.15px;top:19px;transform:translateY(0.203px) scaleX(1.06);letter-spacing:0.21px">03/30/2019</span>
<a class="t s13 lnk" style="left:256.34px;top:19px;transform:translateY(0.203px)">0</a>
<span class="t s13" style="left:425.18px;top:19px;transform:translateY(0.203px) scaleX(1.08);letter-spacing:-0.09px">$0.00</span>
<span class="t s13" style="left:562.15px;top:19px;transform:translateY(0.203px) scaleX(1.08);letter-spacing:-0.09px">$0.00</span>
<span class="t s13" style="left:705.1px;top:19px;transform:translateY(0.203px) scaleX(1.08);letter-spacing:-0.09px">$0.00</span>
<span class="t s13" style="left:819.14px;top:19px;transform:translateY(0.203px) scaleX(1.08);letter-spacing:-0.09px">$0.00</span>
<span class="t s13" style="left:962.23px;top:19px;transform:translateY(0.203px) scaleX(1.08);letter-spacing:-0.09px">$0.00</span>
<span class="t s13" style="left:1139.14px;top:19px;transform:translateY(0.203px) scaleX(1.08);letter-spacing:-0.09px">$0.00</span>
</div>
<div class="tr" style="top:137px">
<div class="dc" style="width:162.94px"></div>
<span class="t s13" style="left:24.15px;top:18px;transform:translateY(0.828px) scaleX(1.06);letter-spacing:0.18px">03/29/2019</span>
<a class="t s13 lnk" style="left:256.34px;top:18px;transform:translateY(0.828px)">1</a>
<span class="t s13" style="left:410.91px;top:18px;transform:translateY(0.828px) scaleX(1.08);letter-spacing:-0.26px">$150.00</span>
<span class="t s13" style="left:562.15px;top:18px;transform:translateY(0.828px) scaleX(1.08);letter-spacing:-0.09px">$0.00</span>
<span class="t s13" style="left:698.7px;top:18px;transform:translateY(0.828px) scaleX(1.08);letter-spacing:-0.33px">$10.00</span>
<span class="t s13" style="left:819.14px;top:18px;transform:translateY(0.828px) scaleX(1.08);letter-spacing:-0.09px">$0.00</span>
<span class="t s13" style="left:955.83px;top:18px;transform:translateY(0.828px) scaleX(1.08);letter-spacing:-0.33px">$15.00</span>
<span class="t s13" style="left:1124.37px;top:18px;transform:translateY(0.828px) scaleX(1.08);letter-spacing:-0.19px">$135.00</span>
</div>
<div class="tr" style="top:188px">
<div class="dc" style="width:162.94px"></div>
<span class="t s13" style="left:24.15px;top:19px;transform:translateY(0.156px) scaleX(1.06);letter-spacing:0.18px">03/28/2019</span>
<a class="t s13 lnk" style="left:256.34px;top:19px;transform:translateY(0.156px)">1</a>
<span class="t s13" style="left:409.57px;top:19px;transform:translateY(0.156px) scaleX(1.08);letter-spacing:-0.06px">$475.00</span>
<span class="t s13" style="left:562.15px;top:19px;transform:translateY(0.156px) scaleX(1.08);letter-spacing:-0.09px">$0.00</span>
<span class="t s13" style="left:705.1px;top:19px;transform:translateY(0.156px) scaleX(1.08);letter-spacing:-0.09px">$0.00</span>
<span class="t s13" style="left:819.14px;top:19px;transform:translateY(0.156px) scaleX(1.08);letter-spacing:-0.09px">$0.00</span>
<span class="t s13" style="left:962.23px;top:19px;transform:translateY(0.156px) scaleX(1.08);letter-spacing:-0.09px">$0.00</span>
<span class="t s13" style="left:1123.53px;top:19px;transform:translateY(0.156px) scaleX(1.08);letter-spacing:-0.06px">$475.00</span>
</div>
<div class="tr" style="top:239px">
<div class="dc" style="width:162.94px"></div>
<span class="t s13" style="left:24.15px;top:19px;transform:translateY(0.484px) scaleX(1.06);letter-spacing:0.06px">03/27/2019</span>
<a class="t s13 lnk" style="left:256.52px;top:19px;transform:translateY(0.484px)">2</a>
<span class="t s13" style="left:408.8px;top:19px;transform:translateY(0.484px) scaleX(1.08);letter-spacing:0.06px">$602.00</span>
<span class="t s13" style="left:562.15px;top:19px;transform:translateY(0.484px) scaleX(1.08);letter-spacing:-0.09px">$0.00</span>
<span class="t s13" style="left:705.1px;top:19px;transform:translateY(0.484px) scaleX(1.08);letter-spacing:-0.09px">$0.00</span>
<span class="t s13" style="left:819.14px;top:19px;transform:translateY(0.484px) scaleX(1.08);letter-spacing:-0.09px">$0.00</span>
<span class="t s13" style="left:962.23px;top:19px;transform:translateY(0.484px) scaleX(1.08);letter-spacing:-0.09px">$0.00</span>
<span class="t s13" style="left:1122.75px;top:19px;transform:translateY(0.484px) scaleX(1.08);letter-spacing:0.06px">$602.00</span>
</div>
<div class="tr" style="top:290px">
<div class="dc" style="width:162.94px"></div>
<span class="t s13" style="left:24.15px;top:19px;transform:translateY(0.109px) scaleX(1.06);letter-spacing:0.18px">03/26/2019</span>
<a class="t s13 lnk" style="left:256.34px;top:19px;transform:translateY(0.109px)">3</a>
<span class="t s13" style="left:401.91px;top:19px;transform:translateY(0.109px) scaleX(1.08);letter-spacing:-0.52px">$1,214.00</span>
<span class="t s13" style="left:562.15px;top:19px;transform:translateY(0.109px) scaleX(1.08);letter-spacing:-0.09px">$0.00</span>
<span class="t s13" style="left:705.1px;top:19px;transform:translateY(0.109px) scaleX(1.08);letter-spacing:-0.09px">$0.00</span>
<span class="t s13" style="left:819.14px;top:19px;transform:translateY(0.109px) scaleX(1.08);letter-spacing:-0.09px">$0.00</span>
<span class="t s13" style="left:962.23px;top:19px;transform:translateY(0.109px) scaleX(1.08);letter-spacing:-0.09px">$0.00</span>
<span class="t s13" style="left:1115.86px;top:19px;transform:translateY(0.109px) scaleX(1.08);letter-spacing:-0.52px">$1,214.00</span>
</div>
<div class="tr" style="top:341px"><div class="dc" style="width:162.94px"></div></div>
</div></div>
</div>
</body>
</html>
